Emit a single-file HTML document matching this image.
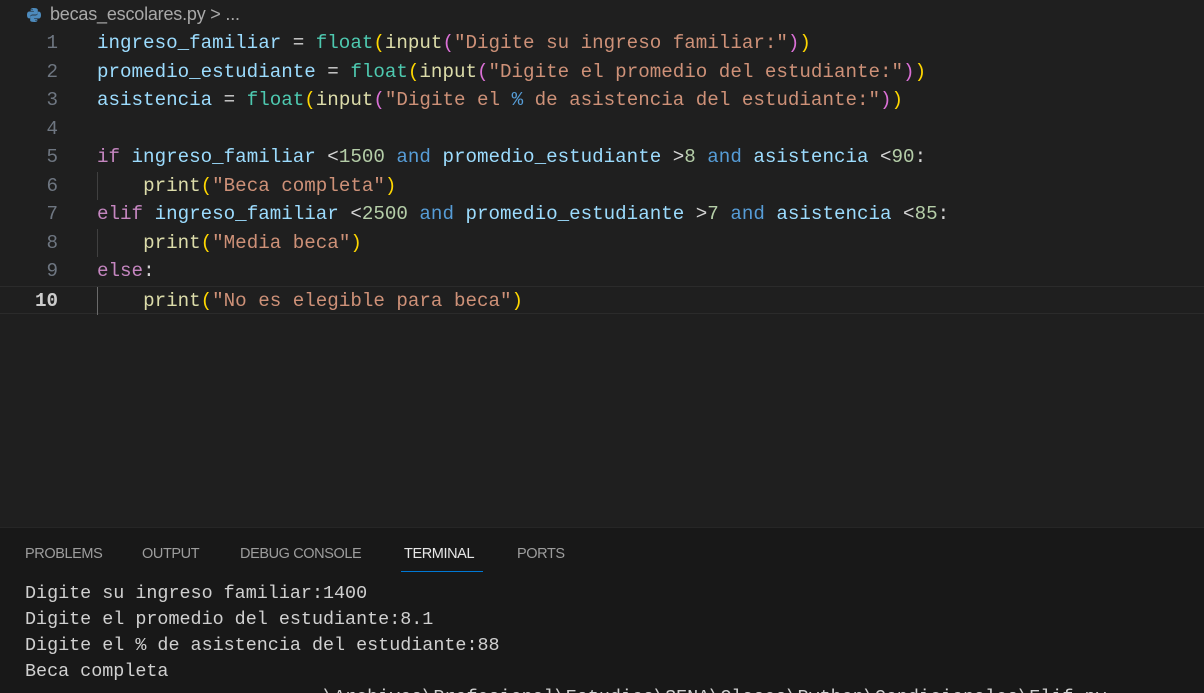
<!DOCTYPE html>
<html><head><meta charset="utf-8"><style>
html,body{margin:0;width:1204px;height:693px;overflow:hidden}
body{background:#1f1f1f;font-family:"Liberation Sans",sans-serif;position:relative}
.bc{position:absolute;left:26px;top:2px;height:24px;color:#a9a9a9;font-size:18px;line-height:24px;letter-spacing:-0.2px}
.bc svg{vertical-align:-3px;margin-right:8px}
.code{position:absolute;left:0;top:29px;width:1204px}
.ln{position:relative;height:28.55px;line-height:28.55px;font-family:"Liberation Mono",monospace;font-size:19.2px;white-space:pre;color:#d4d4d4}
.ln .n{position:absolute;left:0;width:58px;text-align:right;color:#6e7681}
.ln .t{position:absolute;left:97px}
.cur{border-top:1px solid #2b2b2b;border-bottom:1px solid #2b2b2b;box-sizing:border-box}
.cur .n{color:#ccc;font-weight:bold}
.guide{position:absolute;left:97px;width:1px;background:#404040;height:28.55px;top:0}
.v{color:#9cdcfe}.f{color:#4ec9b0}.fn{color:#dcdcaa}.s{color:#ce9178}.p1{color:#ffd700}.p2{color:#da70d6}.k{color:#c586c0}.a{color:#569cd6}.num{color:#b5cea8}
.panel{position:absolute;left:0;top:527px;width:1204px;height:166px;background:#181818;border-top:1px solid #262626;overflow:hidden}
.tabs{position:absolute;top:18px;left:25px;font-size:14.5px;color:#9d9d9d;letter-spacing:-0.4px}
.tabs span{position:absolute;white-space:nowrap}
.act{color:#e7e7e7}
.und{position:absolute;left:401px;top:43px;width:82px;height:1px;background:#0078d4}
.term{position:absolute;left:25px;top:53px;font-family:"Liberation Mono",monospace;font-size:18.4px;line-height:26px;color:#d0d0d0;white-space:pre}
</style></head><body>
<div class="bc"><svg width="16" height="16" viewBox="0 0 16 16"><path d="M7.8 1C4.5 1 4.7 2.4 4.7 2.4V4h3.2v.5H3.4S1 4.2 1 7.9s2.1 3.5 2.1 3.5h1.2V9.7s-.1-2.1 2.1-2.1h3.4s2 0 2-2V2.9S12.1 1 7.8 1zM6 2.1a.6.6 0 110 1.2.6.6 0 010-1.2z" fill="#4d8bbd"/><path d="M8.2 15c3.3 0 3.1-1.4 3.1-1.4V12H8.1v-.5h4.5S15 11.8 15 8.1s-2.1-3.5-2.1-3.5h-1.2v1.7s.1 2.1-2.1 2.1H6.2s-2 0-2 2v3.1S3.9 15 8.2 15zm1.8-1.1a.6.6 0 110-1.2.6.6 0 010 1.2z" fill="#4d8bbd"/></svg>becas_escolares.py &gt; ...</div>
<div class="code">
<div class="ln"><span class="n">1</span><span class="t"><span class="v">ingreso_familiar</span> = <span class="f">float</span><span class="p1">(</span><span class="fn">input</span><span class="p2">(</span><span class="s">"Digite su ingreso familiar:"</span><span class="p2">)</span><span class="p1">)</span></span></div>
<div class="ln"><span class="n">2</span><span class="t"><span class="v">promedio_estudiante</span> = <span class="f">float</span><span class="p1">(</span><span class="fn">input</span><span class="p2">(</span><span class="s">"Digite el promedio del estudiante:"</span><span class="p2">)</span><span class="p1">)</span></span></div>
<div class="ln"><span class="n">3</span><span class="t"><span class="v">asistencia</span> = <span class="f">float</span><span class="p1">(</span><span class="fn">input</span><span class="p2">(</span><span class="s">"Digite el </span><span class="a">%</span><span class="s"> de asistencia del estudiante:"</span><span class="p2">)</span><span class="p1">)</span></span></div>
<div class="ln"><span class="n">4</span></div>
<div class="ln"><span class="n">5</span><span class="t"><span class="k">if</span> <span class="v">ingreso_familiar</span> &lt;<span class="num">1500</span> <span class="a">and</span> <span class="v">promedio_estudiante</span> &gt;<span class="num">8</span> <span class="a">and</span> <span class="v">asistencia</span> &lt;<span class="num">90</span>:</span></div>
<div class="ln"><div class="guide"></div><span class="n">6</span><span class="t">    <span class="fn">print</span><span class="p1">(</span><span class="s">"Beca completa"</span><span class="p1">)</span></span></div>
<div class="ln"><span class="n">7</span><span class="t"><span class="k">elif</span> <span class="v">ingreso_familiar</span> &lt;<span class="num">2500</span> <span class="a">and</span> <span class="v">promedio_estudiante</span> &gt;<span class="num">7</span> <span class="a">and</span> <span class="v">asistencia</span> &lt;<span class="num">85</span>:</span></div>
<div class="ln"><div class="guide"></div><span class="n">8</span><span class="t">    <span class="fn">print</span><span class="p1">(</span><span class="s">"Media beca"</span><span class="p1">)</span></span></div>
<div class="ln"><span class="n">9</span><span class="t"><span class="k">else</span>:</span></div>
<div class="ln cur"><div class="guide" style="background:#6a6a6a"></div><span class="n">10</span><span class="t">    <span class="fn">print</span><span class="p1">(</span><span class="s">"No es elegible para beca"</span><span class="p1">)</span></span></div>
</div>
<div class="panel">
<div class="tabs"><span style="left:0">PROBLEMS</span><span style="left:117px">OUTPUT</span><span style="left:215px">DEBUG CONSOLE</span><span class="act" style="left:379px">TERMINAL</span><span style="left:492px">PORTS</span></div>
<div class="und"></div>
<div class="term">Digite su ingreso familiar:1400
Digite el promedio del estudiante:8.1
Digite el % de asistencia del estudiante:88
Beca completa
                           \Archivos\Profesional\Estudios\SENA\Clases\Python\Condicionales\Elif.py</div>
</div>
</body></html>
